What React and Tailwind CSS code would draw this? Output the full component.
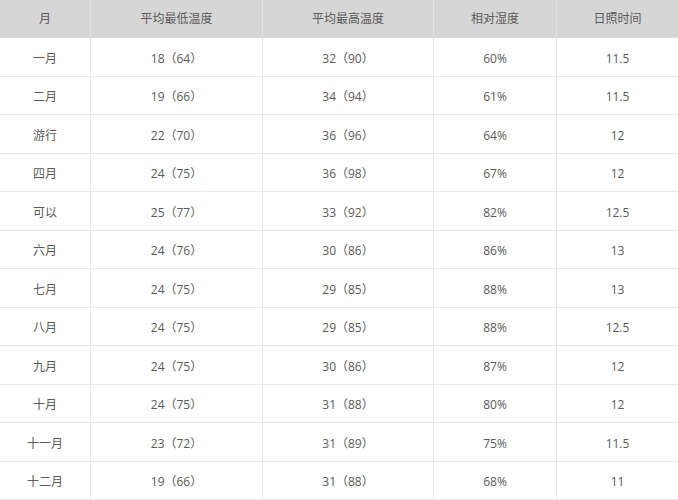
const head = ["月", "平均最低温度", "平均最高温度", "相对湿度", "日照时间"];

const rows = [
  ["一月", "18（64）", "32（90）", "60%", "11.5"],
  ["二月", "19（66）", "34（94）", "61%", "11.5"],
  ["游行", "22（70）", "36（96）", "64%", "12"],
  ["四月", "24（75）", "36（98）", "67%", "12"],
  ["可以", "25（77）", "33（92）", "82%", "12.5"],
  ["六月", "24（76）", "30（86）", "86%", "13"],
  ["七月", "24（75）", "29（85）", "88%", "13"],
  ["八月", "24（75）", "29（85）", "88%", "12.5"],
  ["九月", "24（75）", "30（86）", "87%", "12"],
  ["十月", "24（75）", "31（88）", "80%", "12"],
  ["十一月", "23（72）", "31（89）", "75%", "11.5"],
  ["十二月", "19（66）", "31（88）", "68%", "11"],
];

const cols = "grid grid-cols-[90px_172px_171px_123px_122px]";

export default function App() {
  return (
    <div
      className="w-[678px] h-[500px] overflow-hidden bg-white text-[#5a5a5a] text-[12px]"
      style={{ fontFamily: '"Open Sans", "Noto Sans CJK SC", sans-serif' }}
    >
      <div className={`${cols} h-[38px] bg-[#d6d6d6]`}>
        {head.map((h, i) => (
          <div
            key={h}
            className={`flex items-center justify-center ${i > 0 ? "border-l border-[#e2e2e2]" : ""}`}
          >
            {h}
          </div>
        ))}
      </div>
      {rows.map((r) => (
        <div key={r[0]} className={`${cols} h-[38.5px] border-b border-[#e8e8e8]`}>
          {r.map((c, i) => (
            <div
              key={i}
              className={`flex items-center justify-center pt-1 ${i > 0 ? "border-l border-[#e8e8e8]" : ""}`}
            >
              {c}
            </div>
          ))}
        </div>
      ))}
    </div>
  );
}
